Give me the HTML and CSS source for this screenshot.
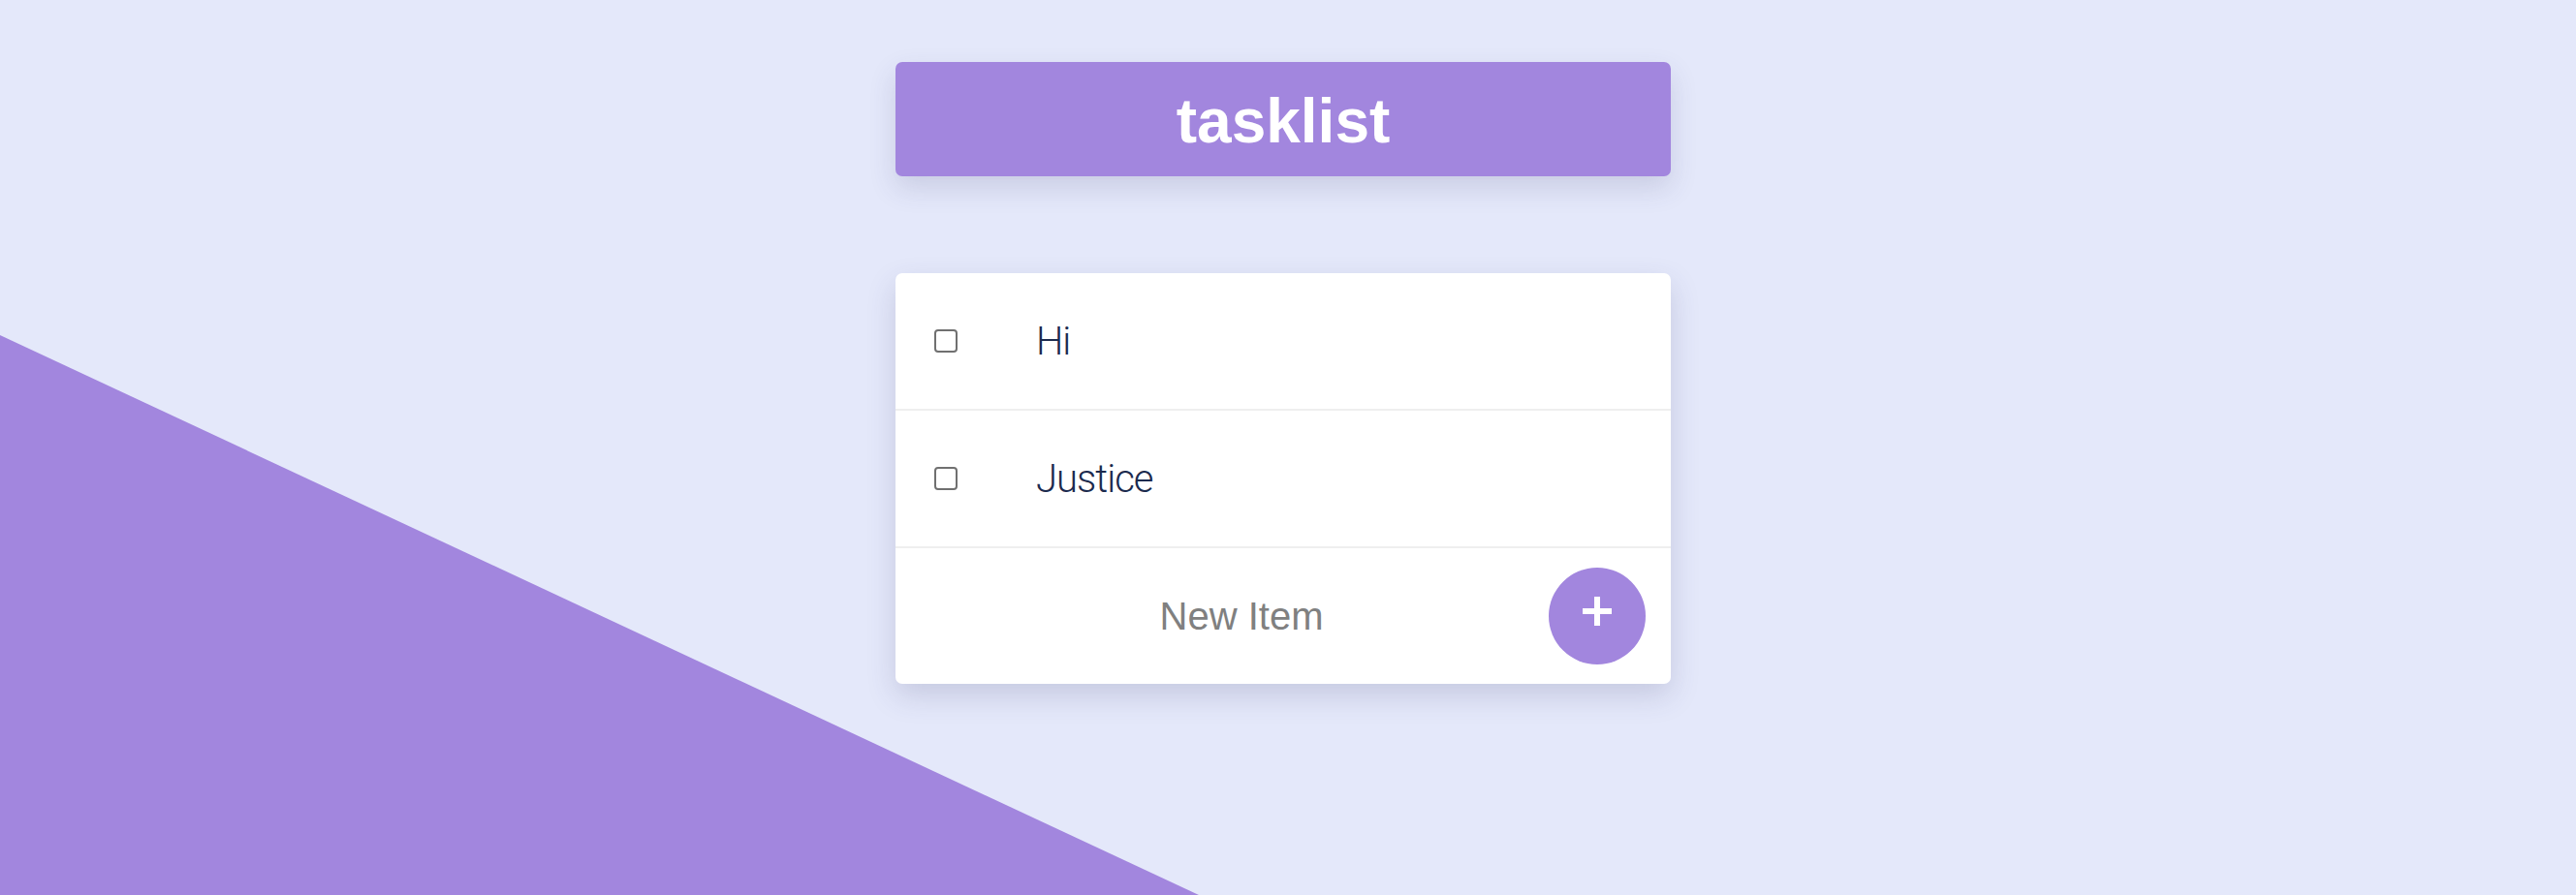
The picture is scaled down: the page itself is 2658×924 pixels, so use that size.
FILE: index.html
```html
<!DOCTYPE html>
<html lang="en">
<head>
<meta charset="utf-8">
<title>tasklist</title>
<link rel="stylesheet" href="styles.css">
</head>
<body>
<div class="backdrop"></div>
<main class="app">
  <header class="title-bar">
    <h1 class="title">tasklist</h1>
  </header>
  <section class="card">
    <div class="task-row">
      <span class="check"></span>
      <span class="task-text">Hi</span>
    </div>
    <div class="task-row">
      <span class="check"></span>
      <span class="task-text">Justice</span>
    </div>
    <div class="new-row">
      <input class="new-input" type="text" placeholder="New Item">
      <button class="add-btn" type="button" aria-label="Add">
        <svg class="plus" width="30" height="30" viewBox="0 0 30 30"><rect x="12" y="0" width="6" height="30" fill="#fff"/><rect x="0" y="12" width="30" height="6" fill="#fff"/></svg>
      </button>
    </div>
  </section>
</main>
</body>
</html>
```
FILE: styles.css
```css
html, body {
  margin: 0;
  padding: 0;
  height: 100%;
}
body {
  background: #e4e8fa;
  font-family: "Liberation Sans", Arial, sans-serif;
  overflow: hidden;
  position: relative;
}
.backdrop {
  position: absolute;
  inset: 0;
  background: #a286de;
  clip-path: polygon(0 346px, 1237px 100%, 0 100%);
  z-index: 0;
}
.app {
  position: relative;
  z-index: 1;
  width: 800px;
  margin: 64px 0 0 calc(50% - 405px);
  display: flex;
  flex-direction: column;
  gap: 100px;
}
.title-bar {
  height: 118px;
  background: #a286de;
  border-radius: 7px;
  box-shadow: 0 12px 28px rgba(60, 60, 110, 0.16);
  display: flex;
  align-items: center;
  justify-content: center;
}
.title {
  margin: 0;
  padding-top: 4px;
  color: #fff;
  font-size: 64px;
  font-weight: 700;
  line-height: normal;
}
.card {
  background: #fff;
  border-radius: 7px;
  box-shadow: 0 12px 30px rgba(60, 60, 110, 0.18);
  overflow: hidden;
}
.task-row {
  height: 140px;
  border-bottom: 2px solid #efefef;
  display: flex;
  align-items: center;
  padding-left: 40px;
}
.check {
  width: 20px;
  height: 20px;
  border: 2.5px solid #707070;
  border-radius: 4px;
  flex: none;
}
.task-text {
  margin-left: 81px;
  font-family: Roboto, "Liberation Sans", sans-serif;
  font-weight: 300;
  font-size: 40px;
  color: #1b2a4e;
  letter-spacing: -1px;
}
.new-row {
  height: 140px;
  display: flex;
  align-items: center;
  padding-right: 26px;
}
.new-input {
  flex: 1;
  min-width: 0;
  border: none;
  outline: none;
  background: transparent;
  padding: 0 0 0 40px;
  text-align: center;
  font-family: "Liberation Sans", Arial, sans-serif;
  font-size: 40px;
  color: #808080;
}
.new-input::placeholder {
  color: #808080;
}
.add-btn {
  width: 100px;
  height: 100px;
  border-radius: 50%;
  border: none;
  background: #a286de;
  padding: 0;
  display: flex;
  align-items: center;
  justify-content: center;
  flex: none;
}
.plus {
  margin-bottom: 11px;
}
```
